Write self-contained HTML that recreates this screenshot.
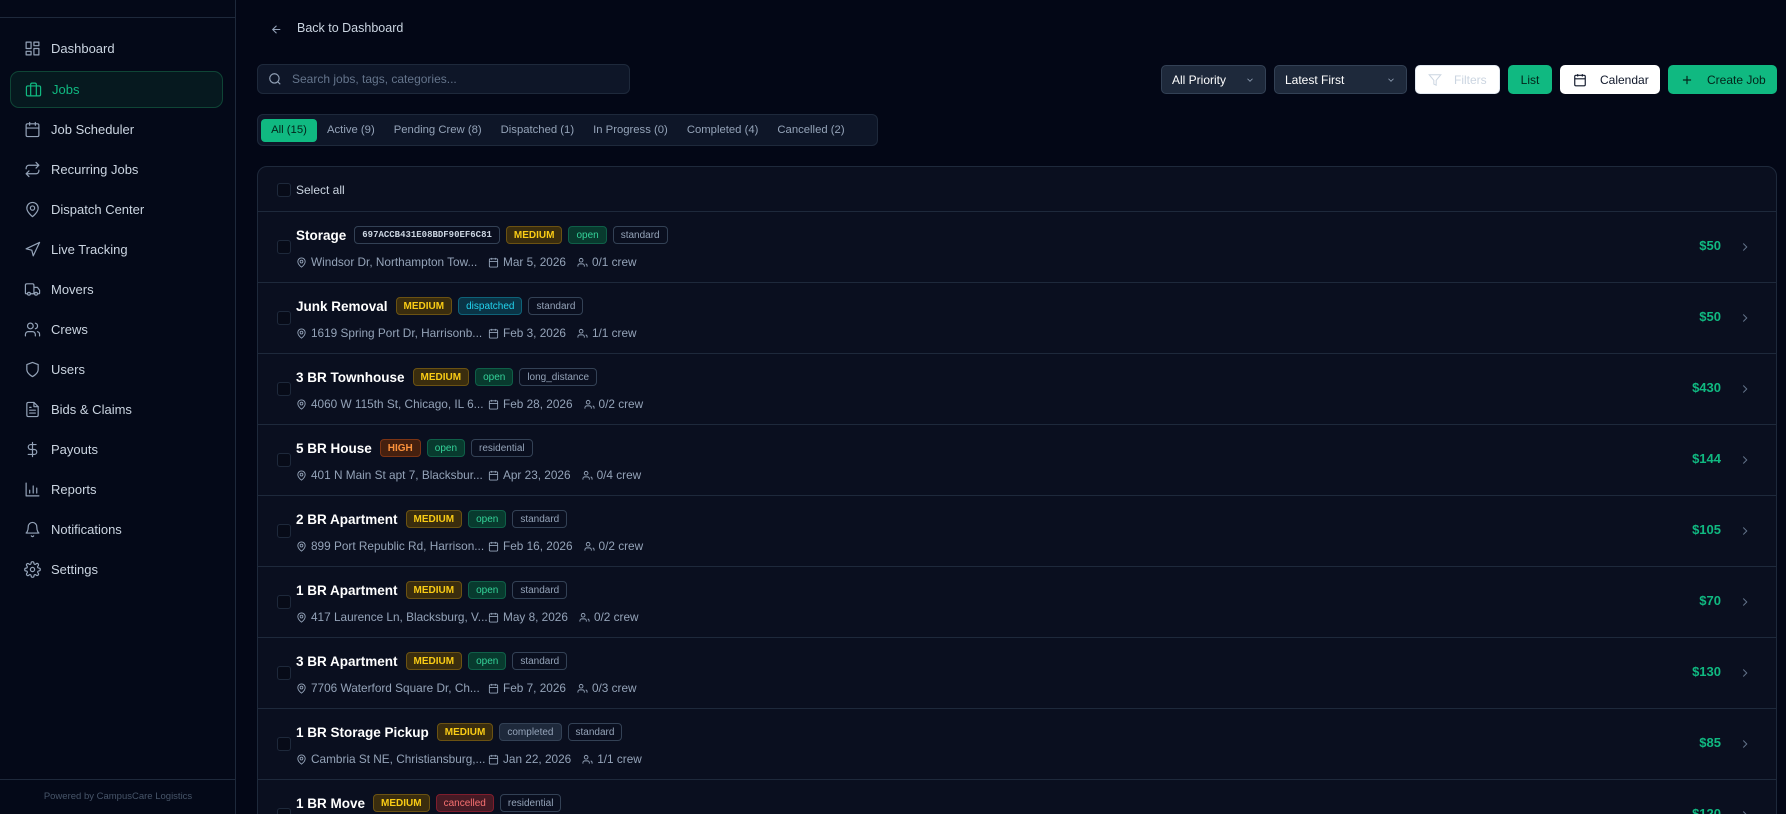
<!DOCTYPE html>
<html><head><meta charset="utf-8"><style>
*{box-sizing:border-box;margin:0;padding:0}
html,body{width:1786px;height:814px;overflow:hidden}
body{background:#030716;font-family:"Liberation Sans",sans-serif;color:#e2e8f0;position:relative}
.side{position:absolute;left:0;top:0;width:236px;height:814px;background:#040918;border-right:1px solid #1e293b}
.side .tl{position:absolute;left:0;top:17px;width:236px;height:1px;background:#1e293b}
.nav{position:absolute;left:10px;width:213px;height:37px;display:flex;align-items:center;padding-left:14px;font-size:13px;color:#cbd5e1}
.nav svg{width:17px;height:17px;margin-right:10px;stroke:#94a3b8;fill:none;stroke-width:1.7;stroke-linecap:round;stroke-linejoin:round;flex-shrink:0}
.nav.act{background:#06191f;border:1px solid #0f4536;border-radius:9px;color:#10b981}
.nav.act svg{stroke:#10b981}
.foot{position:absolute;left:0;top:779px;width:236px;border-top:1px solid #1e293b;text-align:center;font-size:9.5px;color:#475569;padding-top:11px}
.abs{position:absolute}
.btn{position:absolute;top:65px;height:29px;border-radius:5px;display:flex;align-items:center;font-size:12px}
.card{position:absolute;left:257px;top:166px;width:1520px;height:660px;background:#0a0f1f;border:1px solid #1e293b;border-radius:10px;overflow:hidden}
.row{position:absolute;left:0;width:1518px;height:71px;border-top:1px solid #1e293b}
.cb{position:absolute;left:19px;width:14px;height:14px;border:1px solid #1e293b;border-radius:3px;background:#070b18}
.t{position:absolute;left:38px;top:14px;display:flex;align-items:center;gap:6px}
.t b{font-size:13.5px;color:#fff;margin-right:2px}
.bd{height:18px;border-radius:4px;border:1px solid #334155;font-size:10px;padding:0 7px;display:flex;align-items:center;color:#94a3b8}
.med{background:#3a2d0e;border-color:#6b5212;color:#facc15;font-weight:bold}
.hi{background:#45200f;border-color:#7c3414;color:#fb923c;font-weight:bold}
.op{background:#083a2e;border-color:#0f5f48;color:#34d399}
.di{background:#0a3446;border-color:#0e6278;color:#22d3ee}
.co{background:#1e293b;border-color:#334155}
.ca{background:#451a24;border-color:#7f1d2d;color:#f87171}
.hash{font-family:"Liberation Mono",monospace;font-size:9px;color:#cbd5e1;font-weight:bold}
.m{position:absolute;left:38px;top:43px;display:flex;align-items:center;font-size:11.8px;color:#94a3b8;white-space:nowrap}
.m svg{width:11px;height:11px;stroke:#94a3b8;fill:none;stroke-width:2;margin-right:4px;flex-shrink:0}
.m .a{width:192px;display:flex;align-items:center;overflow:hidden;flex-shrink:0}
.m .d{display:flex;align-items:center;margin-right:11px}
.pr{position:absolute;right:55px;top:26px;font-size:13px;font-weight:bold;color:#10b981}
.ch{position:absolute;right:24px;top:28px;width:14px;height:14px;stroke:#64748b;fill:none;stroke-width:1.7}
.tabs span{white-space:nowrap}
</style></head><body>
<div class="side"><div class="tl"></div>
<div class="nav" style="top:30px"><svg viewBox="0 0 24 24"><rect x="3" y="3" width="7" height="9"/><rect x="14" y="3" width="7" height="5"/><rect x="14" y="12" width="7" height="9"/><rect x="3" y="16" width="7" height="5"/></svg>Dashboard</div>
<div class="nav act" style="top:71px"><svg viewBox="0 0 24 24"><rect x="2" y="7" width="20" height="14" rx="2"/><path d="M16 21V5a2 2 0 0 0-2-2h-4a2 2 0 0 0-2 2v16"/></svg>Jobs</div>
<div class="nav" style="top:111px"><svg viewBox="0 0 24 24"><rect x="3" y="4" width="18" height="18" rx="2"/><path d="M16 2v4M8 2v4M3 10h18"/></svg>Job Scheduler</div>
<div class="nav" style="top:151px"><svg viewBox="0 0 24 24"><path d="M17 2l4 4-4 4M3 11V10a4 4 0 0 1 4-4h14M7 22l-4-4 4-4M21 13v1a4 4 0 0 1-4 4H3"/></svg>Recurring Jobs</div>
<div class="nav" style="top:191px"><svg viewBox="0 0 24 24"><path d="M20 10c0 6-8 12-8 12s-8-6-8-12a8 8 0 0 1 16 0Z"/><circle cx="12" cy="10" r="3"/></svg>Dispatch Center</div>
<div class="nav" style="top:231px"><svg viewBox="0 0 24 24"><path d="M3 11l19-9-9 19-2-8-8-2z"/></svg>Live Tracking</div>
<div class="nav" style="top:271px"><svg viewBox="0 0 24 24"><path d="M14 18V6a2 2 0 0 0-2-2H4a2 2 0 0 0-2 2v11a1 1 0 0 0 1 1h2M15 18H9M19 18h2a1 1 0 0 0 1-1v-4l-3-4h-5"/><circle cx="17" cy="18" r="2"/><circle cx="7" cy="18" r="2"/></svg>Movers</div>
<div class="nav" style="top:311px"><svg viewBox="0 0 24 24"><path d="M16 21v-2a4 4 0 0 0-4-4H6a4 4 0 0 0-4 4v2"/><circle cx="9" cy="7" r="4"/><path d="M22 21v-2a4 4 0 0 0-3-3.9M16 3.1a4 4 0 0 1 0 7.8"/></svg>Crews</div>
<div class="nav" style="top:351px"><svg viewBox="0 0 24 24"><path d="M12 22s8-4 8-10V5l-8-3-8 3v7c0 6 8 10 8 10z"/></svg>Users</div>
<div class="nav" style="top:391px"><svg viewBox="0 0 24 24"><path d="M14 2H6a2 2 0 0 0-2 2v16a2 2 0 0 0 2 2h12a2 2 0 0 0 2-2V8z"/><path d="M14 2v6h6M16 13H8M16 17H8M10 9H8"/></svg>Bids &amp; Claims</div>
<div class="nav" style="top:431px"><svg viewBox="0 0 24 24"><path d="M12 2v20M17 5H9.5a3.5 3.5 0 0 0 0 7h5a3.5 3.5 0 0 1 0 7H6"/></svg>Payouts</div>
<div class="nav" style="top:471px"><svg viewBox="0 0 24 24"><path d="M3 3v18h18M8 17v-4M13 17V7M18 17v-7"/></svg>Reports</div>
<div class="nav" style="top:511px"><svg viewBox="0 0 24 24"><path d="M6 8a6 6 0 0 1 12 0c0 7 3 9 3 9H3s3-2 3-9M10.3 21a1.9 1.9 0 0 0 3.4 0"/></svg>Notifications</div>
<div class="nav" style="top:551px"><svg viewBox="0 0 24 24"><circle cx="12" cy="12" r="3"/><path d="M19.4 15a1.7 1.7 0 0 0 .3 1.8l.1.1a2 2 0 1 1-2.8 2.8l-.1-.1a1.7 1.7 0 0 0-1.8-.3 1.7 1.7 0 0 0-1 1.5V21a2 2 0 1 1-4 0v-.1a1.7 1.7 0 0 0-1.1-1.5 1.7 1.7 0 0 0-1.8.3l-.1.1a2 2 0 1 1-2.8-2.8l.1-.1a1.7 1.7 0 0 0 .3-1.8 1.7 1.7 0 0 0-1.5-1H3a2 2 0 1 1 0-4h.1a1.7 1.7 0 0 0 1.5-1.1 1.7 1.7 0 0 0-.3-1.8l-.1-.1a2 2 0 1 1 2.8-2.8l.1.1a1.7 1.7 0 0 0 1.8.3H9a1.7 1.7 0 0 0 1-1.5V3a2 2 0 1 1 4 0v.1a1.7 1.7 0 0 0 1 1.5 1.7 1.7 0 0 0 1.8-.3l.1-.1a2 2 0 1 1 2.8 2.8l-.1.1a1.7 1.7 0 0 0-.3 1.8V9a1.7 1.7 0 0 0 1.5 1H21a2 2 0 1 1 0 4h-.1a1.7 1.7 0 0 0-1.5 1z"/></svg>Settings</div>
<div class="foot">Powered by CampusCare Logistics</div>
</div>

<svg class="abs" style="left:270px;top:23px" width="13" height="13" viewBox="0 0 24 24" fill="none" stroke="#94a3b8" stroke-width="2"><path d="M19 12H5M12 19l-7-7 7-7"/></svg>
<div class="abs" style="left:297px;top:21px;font-size:12.5px;color:#cbd5e1">Back to Dashboard</div>

<div class="abs" style="left:257px;top:64px;width:373px;height:30px;background:#0e1628;border:1px solid #1e293b;border-radius:6px;display:flex;align-items:center;padding-left:10px;font-size:12px;color:#64748b"><svg width="14" height="14" viewBox="0 0 24 24" fill="none" stroke="#94a3b8" stroke-width="2" style="margin-right:10px"><circle cx="11" cy="11" r="8"/><path d="M21 21l-4.3-4.3"/></svg>Search jobs, tags, categories...</div>

<div class="btn" style="left:1161px;width:105px;background:#1e293b;border:1px solid #334155;padding-left:10px;color:#fff">All Priority<svg style="position:absolute;right:10px" width="10" height="10" viewBox="0 0 24 24" fill="none" stroke="#94a3b8" stroke-width="2"><path d="M6 9l6 6 6-6"/></svg></div>
<div class="btn" style="left:1274px;width:133px;background:#1e293b;border:1px solid #334155;padding-left:10px;color:#fff">Latest First<svg style="position:absolute;right:10px" width="10" height="10" viewBox="0 0 24 24" fill="none" stroke="#94a3b8" stroke-width="2"><path d="M6 9l6 6 6-6"/></svg></div>
<div class="btn" style="left:1415px;width:85px;background:#fff;border:1px solid #e2e8f0;padding-left:12px;color:#cbd5e1"><svg width="14" height="14" viewBox="0 0 24 24" fill="none" stroke="#cbd5e1" stroke-width="1.7" style="margin-right:12px"><path d="M22 3H2l8 9.5V19l4 2v-8.5z"/></svg>Filters</div>
<div class="btn" style="left:1508px;width:44px;background:#10b981;justify-content:center;color:#03241a">List</div>
<div class="btn" style="left:1560px;width:100px;background:#fff;padding-left:13px;color:#0f172a"><svg width="14" height="14" viewBox="0 0 24 24" fill="none" stroke="#0f172a" stroke-width="2" style="margin-right:13px"><rect x="3" y="4" width="18" height="18" rx="2"/><path d="M16 2v4M8 2v4M3 10h18"/></svg>Calendar</div>
<div class="btn" style="left:1668px;width:109px;background:#10b981;padding-left:12px;color:#03241a"><svg width="14" height="14" viewBox="0 0 24 24" fill="none" stroke="#03241a" stroke-width="2" style="margin-right:13px"><path d="M12 5v14M5 12h14"/></svg>Create Job</div>

<div class="abs tabs" style="left:257px;top:114px;width:621px;height:32px;background:#0e1628;border:1px solid #1e293b;border-radius:6px;display:flex;align-items:center;padding-left:3px;font-size:11.3px;color:#94a3b8">
<span style="background:#10b981;color:#03241a;border-radius:4px;height:23px;width:56px;display:flex;align-items:center;justify-content:center">All (15)</span>
<span style="margin-left:10px">Active (9)</span><span style="margin-left:19px">Pending Crew (8)</span><span style="margin-left:19px">Dispatched (1)</span><span style="margin-left:19px">In Progress (0)</span><span style="margin-left:19px">Completed (4)</span><span style="margin-left:19px">Cancelled (2)</span></div>

<div class="card">
<div class="cb" style="top:16px"></div>
<div class="abs" style="left:38px;top:16px;font-size:12px;color:#cbd5e1">Select all</div>

<div class="row" style="top:44px"><div class="cb" style="top:28px"></div><div class="t"><b>Storage</b><span class="bd hash">697ACCB431E08BDF90EF6C81</span><span class="bd med">MEDIUM</span><span class="bd op">open</span><span class="bd">standard</span></div><div class="m"><span class="a"><svg viewBox="0 0 24 24"><path d="M20 10c0 6-8 12-8 12s-8-6-8-12a8 8 0 0 1 16 0Z"/><circle cx="12" cy="10" r="3"/></svg>Windsor Dr, Northampton Tow...</span><span class="d"><svg viewBox="0 0 24 24"><rect x="3" y="4" width="18" height="18" rx="2"/><path d="M16 2v4M8 2v4M3 10h18"/></svg>Mar 5, 2026</span><span class="d"><svg viewBox="0 0 24 24"><circle cx="9" cy="7" r="4"/><path d="M16 21v-2a4 4 0 0 0-4-4H6a4 4 0 0 0-4 4v2M22 21v-2a4 4 0 0 0-3-3.9"/></svg>0/1 crew</span></div><div class="pr">$50</div><svg class="ch" viewBox="0 0 24 24"><path d="M9 18l6-6-6-6"/></svg></div>

<div class="row" style="top:115px"><div class="cb" style="top:28px"></div><div class="t"><b>Junk Removal</b><span class="bd med">MEDIUM</span><span class="bd di">dispatched</span><span class="bd">standard</span></div><div class="m"><span class="a"><svg viewBox="0 0 24 24"><path d="M20 10c0 6-8 12-8 12s-8-6-8-12a8 8 0 0 1 16 0Z"/><circle cx="12" cy="10" r="3"/></svg>1619 Spring Port Dr, Harrisonb...</span><span class="d"><svg viewBox="0 0 24 24"><rect x="3" y="4" width="18" height="18" rx="2"/><path d="M16 2v4M8 2v4M3 10h18"/></svg>Feb 3, 2026</span><span class="d"><svg viewBox="0 0 24 24"><circle cx="9" cy="7" r="4"/><path d="M16 21v-2a4 4 0 0 0-4-4H6a4 4 0 0 0-4 4v2M22 21v-2a4 4 0 0 0-3-3.9"/></svg>1/1 crew</span></div><div class="pr">$50</div><svg class="ch" viewBox="0 0 24 24"><path d="M9 18l6-6-6-6"/></svg></div>

<div class="row" style="top:186px"><div class="cb" style="top:28px"></div><div class="t"><b>3 BR Townhouse</b><span class="bd med">MEDIUM</span><span class="bd op">open</span><span class="bd">long_distance</span></div><div class="m"><span class="a"><svg viewBox="0 0 24 24"><path d="M20 10c0 6-8 12-8 12s-8-6-8-12a8 8 0 0 1 16 0Z"/><circle cx="12" cy="10" r="3"/></svg>4060 W 115th St, Chicago, IL 6...</span><span class="d"><svg viewBox="0 0 24 24"><rect x="3" y="4" width="18" height="18" rx="2"/><path d="M16 2v4M8 2v4M3 10h18"/></svg>Feb 28, 2026</span><span class="d"><svg viewBox="0 0 24 24"><circle cx="9" cy="7" r="4"/><path d="M16 21v-2a4 4 0 0 0-4-4H6a4 4 0 0 0-4 4v2M22 21v-2a4 4 0 0 0-3-3.9"/></svg>0/2 crew</span></div><div class="pr">$430</div><svg class="ch" viewBox="0 0 24 24"><path d="M9 18l6-6-6-6"/></svg></div>

<div class="row" style="top:257px"><div class="cb" style="top:28px"></div><div class="t"><b>5 BR House</b><span class="bd hi">HIGH</span><span class="bd op">open</span><span class="bd">residential</span></div><div class="m"><span class="a"><svg viewBox="0 0 24 24"><path d="M20 10c0 6-8 12-8 12s-8-6-8-12a8 8 0 0 1 16 0Z"/><circle cx="12" cy="10" r="3"/></svg>401 N Main St apt 7, Blacksbur...</span><span class="d"><svg viewBox="0 0 24 24"><rect x="3" y="4" width="18" height="18" rx="2"/><path d="M16 2v4M8 2v4M3 10h18"/></svg>Apr 23, 2026</span><span class="d"><svg viewBox="0 0 24 24"><circle cx="9" cy="7" r="4"/><path d="M16 21v-2a4 4 0 0 0-4-4H6a4 4 0 0 0-4 4v2M22 21v-2a4 4 0 0 0-3-3.9"/></svg>0/4 crew</span></div><div class="pr">$144</div><svg class="ch" viewBox="0 0 24 24"><path d="M9 18l6-6-6-6"/></svg></div>

<div class="row" style="top:328px"><div class="cb" style="top:28px"></div><div class="t"><b>2 BR Apartment</b><span class="bd med">MEDIUM</span><span class="bd op">open</span><span class="bd">standard</span></div><div class="m"><span class="a"><svg viewBox="0 0 24 24"><path d="M20 10c0 6-8 12-8 12s-8-6-8-12a8 8 0 0 1 16 0Z"/><circle cx="12" cy="10" r="3"/></svg>899 Port Republic Rd, Harrison...</span><span class="d"><svg viewBox="0 0 24 24"><rect x="3" y="4" width="18" height="18" rx="2"/><path d="M16 2v4M8 2v4M3 10h18"/></svg>Feb 16, 2026</span><span class="d"><svg viewBox="0 0 24 24"><circle cx="9" cy="7" r="4"/><path d="M16 21v-2a4 4 0 0 0-4-4H6a4 4 0 0 0-4 4v2M22 21v-2a4 4 0 0 0-3-3.9"/></svg>0/2 crew</span></div><div class="pr">$105</div><svg class="ch" viewBox="0 0 24 24"><path d="M9 18l6-6-6-6"/></svg></div>

<div class="row" style="top:399px"><div class="cb" style="top:28px"></div><div class="t"><b>1 BR Apartment</b><span class="bd med">MEDIUM</span><span class="bd op">open</span><span class="bd">standard</span></div><div class="m"><span class="a"><svg viewBox="0 0 24 24"><path d="M20 10c0 6-8 12-8 12s-8-6-8-12a8 8 0 0 1 16 0Z"/><circle cx="12" cy="10" r="3"/></svg>417 Laurence Ln, Blacksburg, V...</span><span class="d"><svg viewBox="0 0 24 24"><rect x="3" y="4" width="18" height="18" rx="2"/><path d="M16 2v4M8 2v4M3 10h18"/></svg>May 8, 2026</span><span class="d"><svg viewBox="0 0 24 24"><circle cx="9" cy="7" r="4"/><path d="M16 21v-2a4 4 0 0 0-4-4H6a4 4 0 0 0-4 4v2M22 21v-2a4 4 0 0 0-3-3.9"/></svg>0/2 crew</span></div><div class="pr">$70</div><svg class="ch" viewBox="0 0 24 24"><path d="M9 18l6-6-6-6"/></svg></div>

<div class="row" style="top:470px"><div class="cb" style="top:28px"></div><div class="t"><b>3 BR Apartment</b><span class="bd med">MEDIUM</span><span class="bd op">open</span><span class="bd">standard</span></div><div class="m"><span class="a"><svg viewBox="0 0 24 24"><path d="M20 10c0 6-8 12-8 12s-8-6-8-12a8 8 0 0 1 16 0Z"/><circle cx="12" cy="10" r="3"/></svg>7706 Waterford Square Dr, Ch...</span><span class="d"><svg viewBox="0 0 24 24"><rect x="3" y="4" width="18" height="18" rx="2"/><path d="M16 2v4M8 2v4M3 10h18"/></svg>Feb 7, 2026</span><span class="d"><svg viewBox="0 0 24 24"><circle cx="9" cy="7" r="4"/><path d="M16 21v-2a4 4 0 0 0-4-4H6a4 4 0 0 0-4 4v2M22 21v-2a4 4 0 0 0-3-3.9"/></svg>0/3 crew</span></div><div class="pr">$130</div><svg class="ch" viewBox="0 0 24 24"><path d="M9 18l6-6-6-6"/></svg></div>

<div class="row" style="top:541px"><div class="cb" style="top:28px"></div><div class="t"><b>1 BR Storage Pickup</b><span class="bd med">MEDIUM</span><span class="bd co">completed</span><span class="bd">standard</span></div><div class="m"><span class="a"><svg viewBox="0 0 24 24"><path d="M20 10c0 6-8 12-8 12s-8-6-8-12a8 8 0 0 1 16 0Z"/><circle cx="12" cy="10" r="3"/></svg>Cambria St NE, Christiansburg,...</span><span class="d"><svg viewBox="0 0 24 24"><rect x="3" y="4" width="18" height="18" rx="2"/><path d="M16 2v4M8 2v4M3 10h18"/></svg>Jan 22, 2026</span><span class="d"><svg viewBox="0 0 24 24"><circle cx="9" cy="7" r="4"/><path d="M16 21v-2a4 4 0 0 0-4-4H6a4 4 0 0 0-4 4v2M22 21v-2a4 4 0 0 0-3-3.9"/></svg>1/1 crew</span></div><div class="pr">$85</div><svg class="ch" viewBox="0 0 24 24"><path d="M9 18l6-6-6-6"/></svg></div>

<div class="row" style="top:612px"><div class="cb" style="top:28px"></div><div class="t"><b>1 BR Move</b><span class="bd med">MEDIUM</span><span class="bd ca">cancelled</span><span class="bd">residential</span></div><div class="pr">$120</div><svg class="ch" viewBox="0 0 24 24"><path d="M9 18l6-6-6-6"/></svg></div>
</div>
</body></html>
